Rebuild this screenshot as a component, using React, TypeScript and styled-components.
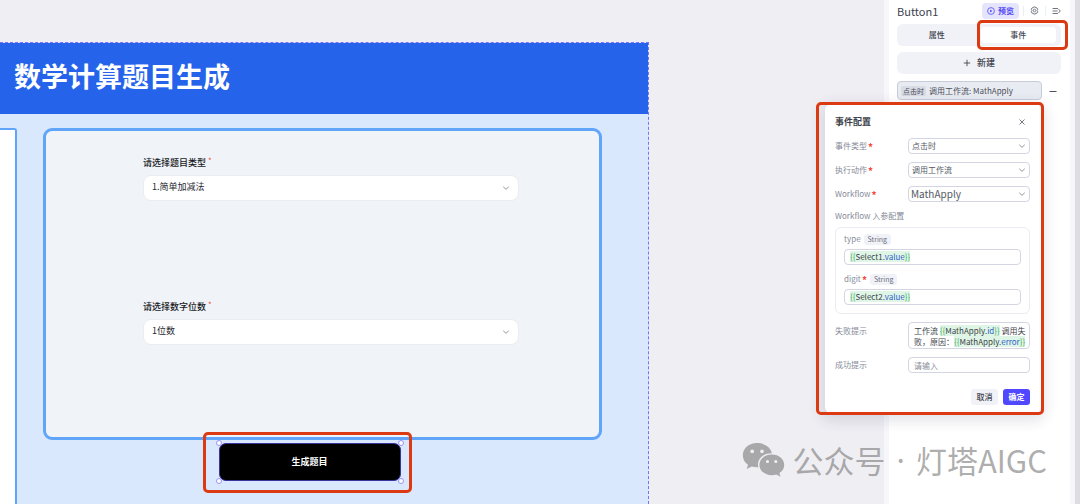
import React from "react";
import styled, { createGlobalStyle, css } from "styled-components";

const GlobalStyle = createGlobalStyle`
  *, *::before, *::after { box-sizing: border-box; }
  body {
    margin: 0;
    background: #efeef3;
    font-family: "Noto Sans CJK SC", "Noto Sans", sans-serif;
    font-size: 8px;
    line-height: 12px;
    color: #41464c;
  }
  button, input, select, textarea { font: inherit; color: inherit; margin: 0; }
  h1, h2 { margin: 0; }
`;

const red = "#dc3a12";

const Editor = styled.div`
  position: relative;
  display: flex;
  min-height: 100vh;
  overflow: hidden;
`;

const Stage = styled.main`
  flex: 1;
  display: flex;
  min-width: 0;
  padding: 42px 235px 0 0;
`;

const Artboard = styled.section`
  flex: 1;
  display: flex;
  flex-direction: column;
  min-width: 0;
  background: #dae8fe;
  border: 1px dashed #7a70fa;
  border-width: 1px 1px 0 0;
`;

const Banner = styled.header`
  height: 71px;
  display: flex;
  align-items: center;
  padding: 0 14px 5px;
  background: #2563eb;
`;

const BannerTitle = styled.h1`
  color: #fff;
  font-size: 27px;
  line-height: 40px;
  font-weight: 700;
`;

const Content = styled.div`
  flex: 1;
  display: flex;
  gap: 26px;
  padding: 14px 46px 0 0;
`;

const SideCard = styled.div`
  width: 17px;
  background: #fff;
  border: solid #60a5fa;
  border-width: 2px 2px 0 0;
  border-radius: 0 3px 0 0;
`;

const Column = styled.div`
  flex: 1;
  min-width: 0;
  display: flex;
  flex-direction: column;
  align-items: center;
  gap: 3px;
`;

const FormCard = styled.div`
  width: 100%;
  height: 312px;
  display: flex;
  flex-direction: column;
  gap: 100px;
  padding: 26px 80px 0 97px;
  background: #f0f3f8;
  border: 3px solid #60a5fa;
  border-radius: 9px;
`;

const Field = styled.div`
  display: flex;
  flex-direction: column;
  gap: 6px;
  font-size: 9px;
`;

const FieldLabel = styled.label`
  color: #17191d;
  font-weight: 500;
`;

const Required = styled.span<{ $raised?: boolean }>`
  margin-left: ${(p) => (p.$raised ? 2 : 1)}px;
  color: #f5483b;
  font-size: ${(p) => (p.$raised ? 8 : 10)}px;
  font-weight: ${(p) => (p.$raised ? 400 : 700)};
  line-height: 8px;
  vertical-align: ${(p) => (p.$raised ? "top" : "middle")};
`;

const SelectWrap = styled.div<{ $inset: number }>`
  display: grid;
  align-items: center;
  min-width: 0;

  > * { grid-area: 1 / 1; }
  > svg {
    justify-self: end;
    margin-right: ${(p) => p.$inset}px;
    pointer-events: none;
  }
`;

const BigSelect = styled.select`
  appearance: none;
  width: 100%;
  height: 26px;
  padding: 0 24px 2px 8px;
  border: 1px solid #e9ecf0;
  border-radius: 8px;
  background: #fff;
  color: #25282e;
`;

const Selection = styled.div`
  position: relative;
  width: 182px;
  height: 38px;
  margin-right: 26px;
`;

const GenerateButton = styled.button`
  width: 100%;
  height: 100%;
  border: 1px solid #3a34a0;
  border-radius: 7px;
  background: #000;
  color: #fff;
  font-size: 9px;
  font-weight: 700;
`;

const Handle = styled.i<{ $x: "left" | "right"; $y: "top" | "bottom" }>`
  position: absolute;
  ${(p) => p.$x}: -3px;
  ${(p) => p.$y}: -3px;
  width: 6px;
  height: 6px;
  border: 1px solid #9a92fb;
  border-radius: 50%;
  background: #fff;
`;

const Highlight = styled.div<{ $inset: string }>`
  position: absolute;
  inset: ${(p) => p.$inset};
  z-index: 1;
  border: 3px solid ${red};
  border-radius: 5px;
  pointer-events: none;
`;

const Panel = styled.aside`
  position: relative;
  width: 191px;
  display: flex;
  flex-direction: column;
  padding: 2px 9px 0 8px;
  background: #fff;
  border: solid #f6f6fb;
  border-width: 0 5px;
`;

const Gutter = styled.div`
  width: 5px;
  background: #dddde2;
`;

const PanelHead = styled.div`
  height: 17px;
  display: flex;
  align-items: center;
`;

const PanelTitle = styled.h2`
  flex: 1;
  font-size: 11px;
  line-height: 16px;
  font-weight: 400;
  color: #3d4250;
`;

const PreviewButton = styled.button`
  height: 16px;
  display: flex;
  align-items: center;
  gap: 3px;
  padding: 0 5px;
  border: 0;
  border-radius: 4px;
  background: #e4e4fd;
  color: #5349f5;
  font-weight: 700;
`;

const IconButton = styled.button<{ $divided?: boolean }>`
  width: 22px;
  height: 10px;
  display: flex;
  align-items: center;
  justify-content: center;
  padding: 0;
  border: 0;
  background: none;
  color: #4e525e;
  ${(p) => p.$divided && css`border-left: 1px solid #eceef2;`}
`;

const HeadTools = styled.div`
  display: flex;
  align-items: center;
  margin-right: -6px;

  > :first-child { margin-right: 4px; }
`;

const Tabs = styled.div`
  position: relative;
  display: flex;
  gap: 6px;
  height: 22px;
  margin-top: 5px;
  padding: 3px 5px 3px 2px;
  border-radius: 6px;
  background: #f1f2f7;
`;

const Tab = styled.button<{ $active?: boolean }>`
  flex: 1;
  padding: 0;
  border: 0;
  border-radius: 4px;
  background: ${(p) => (p.$active ? "#fff" : "none")};
  color: #41454f;
  font-weight: 500;
`;

const AddButton = styled.button`
  height: 22px;
  display: flex;
  align-items: center;
  justify-content: center;
  gap: 6px;
  margin-top: 6px;
  padding: 0;
  border: 0;
  border-radius: 6px;
  background: #f1f2f7;
  color: #41454f;
  font-size: 9px;
  font-weight: 500;
`;

const EventRow = styled.div`
  display: flex;
  align-items: center;
  margin: 7px -3px 0 0;
`;

const EventItem = styled.button`
  flex: 1;
  height: 19px;
  display: flex;
  align-items: center;
  gap: 3px;
  padding: 0 3px;
  border: 1px solid #c8cbdc;
  border-radius: 4px;
  background: #e9ebf2;
  color: #4a4f5a;
  white-space: nowrap;
`;

const Trigger = styled.span`
  padding: 0 2px;
  border-radius: 2px;
  background: #d9dbe5;
  font-size: 7px;
  line-height: 10px;
`;

const Popover = styled.form`
  position: absolute;
  top: 104px;
  right: 29px;
  width: 216px;
  z-index: 2;
  display: flex;
  flex-direction: column;
  gap: 8px;
  padding: 9px 11px 8px 10px;
  background: #fff;
  border-radius: 6px;
  box-shadow: 0 4px 14px 4px rgba(50, 50, 80, 0.13);
`;

const PopoverHead = styled.div`
  display: flex;
  align-items: center;
  justify-content: space-between;
  height: 17px;
  font-size: 9px;
  font-weight: 700;
  color: #3b3f49;
`;

const PopoverTitle = styled.h2`
  font-size: inherit;
  font-weight: inherit;
`;

const CloseButton = styled.button`
  width: 16px;
  height: 16px;
  display: grid;
  place-items: center;
  padding: 0;
  border: 0;
  background: none;
  color: #50545e;
`;

const Row = styled.div<{ $top?: boolean }>`
  display: grid;
  grid-template-columns: 73px 1fr;
  align-items: ${(p) => (p.$top ? "start" : "center")};
`;

const Caption = styled.label<{ $spaced?: boolean }>`
  color: #868b99;
  white-space: nowrap;
  ${(p) => p.$spaced && css`padding-top: 3px;`}
`;

const GroupCaption = styled.div`
  height: 13px;
  color: #868b99;
`;

const boxed = css`
  border: 1px solid #d3d5e2;
  border-radius: 4px;
  background: #fff;
`;

const SmallSelect = styled.select<{ $large?: boolean }>`
  ${boxed}
  appearance: none;
  width: 100%;
  height: 16px;
  padding: 0 14px 0 ${(p) => (p.$large ? 2 : 3)}px;
  font-size: ${(p) => (p.$large ? 10 : 8)}px;
  line-height: 14px;
  color: #555a65;
`;

const TextInput = styled.input`
  ${boxed}
  width: 100%;
  min-width: 0;
  height: 16px;
  padding: 0 5px;
  &::placeholder { color: #888c99; opacity: 1; }
`;

const Params = styled.div`
  display: flex;
  flex-direction: column;
  gap: 8px;
  margin-top: -4px;
  padding: 5px 8px 8px;
  border: 1px solid #ececf2;
  border-radius: 6px;
`;

const Param = styled.div`
  display: flex;
  flex-direction: column;
  gap: 4px;
`;

const ParamHead = styled.div`
  display: flex;
  align-items: center;
  gap: 3px;
  height: 12px;
`;

const TypeTag = styled.span`
  padding: 0 4px;
  border-radius: 3px;
  background: #f1f1f8;
  color: #6d717e;
  font-size: 7px;
  line-height: 11px;
`;

const CodeField = styled.div<{ $lines?: number }>`
  ${boxed}
  min-height: ${(p) => (p.$lines === 2 ? 27 : 16)}px;
  padding: ${(p) => (p.$lines === 2 ? "2px 0 0 5px" : "1px 5px")};
  line-height: ${(p) => (p.$lines === 2 ? 11 : 12)}px;
  white-space: nowrap;
  overflow: hidden;
  outline: 0;
`;

const Expr = styled.span`
  background: #dff6e7;
  color: #3fae5f;
`;
const Obj = styled.span`
  color: #3e4347;
`;
const Prop = styled.span`
  color: #2e62c9;
`;

const Actions = styled.div`
  display: flex;
  justify-content: flex-end;
  gap: 5px;
  margin-top: 8px;
`;

const ActionButton = styled.button<{ $primary?: boolean }>`
  width: 27px;
  height: 16px;
  padding: 0;
  border: 0;
  border-radius: 3px;
  font-weight: ${(p) => (p.$primary ? 700 : 500)};
  background: ${(p) => (p.$primary ? "#5147ff" : "#f1f2f7")};
  color: ${(p) => (p.$primary ? "#fff" : "#41454f")};
`;

const Watermark = styled.div`
  position: absolute;
  right: 33px;
  bottom: 21px;
  z-index: 3;
  display: flex;
  align-items: center;
  gap: 8px;
  color: rgba(120, 120, 120, 0.6);
  font-size: 31px;
  line-height: 46px;
  white-space: nowrap;
  pointer-events: none;
`;

const Dot = styled.span`
  margin: 0 3px;
  font-family: "Noto Sans", sans-serif;
`;

const Chevron = () => (
  <svg width="8" height="8" viewBox="0 0 8 8" fill="none" stroke="#888c96" strokeWidth="0.9" strokeLinecap="round" strokeLinejoin="round" aria-hidden="true">
    <path d="M1.5 3 4 5.300 6.500 3" />
  </svg>
);

const PlayIcon = () => (
  <svg width="8" height="8" viewBox="0 0 8 8" fill="none" stroke="currentColor" strokeWidth="0.8" aria-hidden="true">
    <circle cx="4" cy="4" r="3.4" />
    <path d="M3.2 2.6 5.4 4 3.2 5.4Z" fill="currentColor" stroke="none" />
  </svg>
);

const GearIcon = () => (
  <svg width="9" height="9" viewBox="0 0 9 9" fill="none" stroke="currentColor" strokeWidth="0.7" strokeLinejoin="round" aria-hidden="true">
    <path d="M3.7.9h1.600l.5 1 1.200-.1.8 1.400-.7 1.300.7 1.300L7 7.200l-1.200-.1-.5 1H3.700l-.5-1-1.200.1-.8-1.400.7-1.300-.7-1.300L2 1.800l1.200.1Z" />
    <circle cx="4.5" cy="4.5" r="1.3" />
  </svg>
);

const CollapseIcon = () => (
  <svg width="9" height="8" viewBox="0 0 9 8" fill="none" stroke="currentColor" strokeWidth="0.8" strokeLinecap="round" strokeLinejoin="round" aria-hidden="true">
    <path d="M1 1.5h4.6M1 4h4.2M1 6.5h4.6M6.6 2.2 8.3 4 6.6 5.8" />
  </svg>
);

const PlusIcon = () => (
  <svg width="8" height="8" viewBox="0 0 8 8" stroke="currentColor" strokeWidth="0.9" aria-hidden="true">
    <path d="M4 .8v6.4M.8 4h6.4" />
  </svg>
);

const MinusIcon = () => (
  <svg width="8" height="8" viewBox="0 0 8 8" stroke="currentColor" strokeWidth="1" aria-hidden="true">
    <path d="M.5 4.5h7" />
  </svg>
);

const CloseIcon = () => (
  <svg width="6" height="6" viewBox="0 0 6 6" stroke="currentColor" strokeWidth="0.8" strokeLinecap="round" aria-hidden="true">
    <path d="M.8.8l4.4 4.4M5.2.8.8 5.2" />
  </svg>
);

const ChatLogo = () => (
  <svg width="43" height="36" viewBox="0 0 43 36" fill="currentColor" aria-hidden="true">
    <path
      fillRule="evenodd"
      d="M15 1C7 1 .8 6.400.8 13.200c0 3.900 2 7.300 5.200 9.500L4.700 27l4.900-2.600c1.700.5 3.500.8 5.600.8h1.200c-.3-.9-.4-1.900-.4-2.800 0-6.300 6-11.200 13.300-11.200h.6C28.700 5.300 22.500 1 15 1ZM10.200 7.400a1.900 1.900 0 1 1 0 3.800 1.900 1.900 0 0 1 0-3.800ZM20 7.400a1.900 1.900 0 1 1 0 3.800 1.900 1.900 0 0 1 0-3.800Z"
    />
    <path
      fillRule="evenodd"
      d="M29.800 12.600c-7 0-12.400 4.600-12.400 10.300s5.400 10.300 12.400 10.300c1.600 0 3.100-.2 4.500-.7l4.200 2.300-1.100-3.700c2.900-1.900 4.800-4.900 4.800-8.200 0-5.700-5.400-10.300-12.400-10.300ZM25.500 17.900a1.600 1.600 0 1 1 0 3.200 1.600 1.600 0 0 1 0-3.200ZM33.800 17.900a1.600 1.600 0 1 1 0 3.200 1.600 1.600 0 0 1 0-3.200Z"
    />
  </svg>
);

const Expression = ({ object, prop }: { object: string; prop: string }) => (
  <Expr>
    {"{{"}
    <Obj>{object}.</Obj>
    <Prop>{prop}</Prop>
    {"}}"}
  </Expr>
);

function FormField({ id, label, value }: { id: string; label: string; value: string }) {
  return (
    <Field>
      <FieldLabel htmlFor={id}>
        {label}
        <Required $raised>*</Required>
      </FieldLabel>
      <SelectWrap $inset={9}>
        <BigSelect id={id}>
          <option>{value}</option>
        </BigSelect>
        <Chevron />
      </SelectWrap>
    </Field>
  );
}

function ConfigSelect({ id, label, value, large }: { id: string; label: string; value: string; large?: boolean }) {
  return (
    <Row>
      <Caption htmlFor={id}>
        {label}
        <Required>*</Required>
      </Caption>
      <SelectWrap $inset={4}>
        <SmallSelect id={id} $large={large}>
          <option>{value}</option>
        </SmallSelect>
        <Chevron />
      </SelectWrap>
    </Row>
  );
}

function ParamField({ name, required, object }: { name: string; required?: boolean; object: string }) {
  const id = `param-${name}`;
  return (
    <Param>
      <ParamHead>
        <Caption as="span" id={id}>
          {name}
          {required && <Required>*</Required>}
        </Caption>
        <TypeTag>String</TypeTag>
      </ParamHead>
      <CodeField role="textbox" contentEditable suppressContentEditableWarning aria-labelledby={id}>
        <Expression object={object} prop="value" />
      </CodeField>
    </Param>
  );
}

export default function App() {
  return (
    <Editor>
      <GlobalStyle />
      <Stage>
        <Artboard>
          <Banner>
            <BannerTitle>数学计算题目生成</BannerTitle>
          </Banner>
          <Content>
            <SideCard />
            <Column>
              <FormCard>
                <FormField id="question-type" label="请选择题目类型" value="1.简单加减法" />
                <FormField id="digit-count" label="请选择数字位数" value="1位数" />
              </FormCard>
              <Selection>
                <GenerateButton type="button">生成题目</GenerateButton>
                <Handle $x="left" $y="top" />
                <Handle $x="right" $y="top" />
                <Handle $x="left" $y="bottom" />
                <Handle $x="right" $y="bottom" />
                <Highlight $inset="-11px -11px -12px -16px" />
              </Selection>
            </Column>
          </Content>
        </Artboard>
      </Stage>

      <Panel>
        <PanelHead>
          <PanelTitle>Button1</PanelTitle>
          <HeadTools>
            <PreviewButton type="button">
              <PlayIcon />
              预览
            </PreviewButton>
            <IconButton type="button" $divided aria-label="设置">
              <GearIcon />
            </IconButton>
            <IconButton type="button" $divided aria-label="收起">
              <CollapseIcon />
            </IconButton>
          </HeadTools>
        </PanelHead>
        <Tabs role="tablist">
          <Tab type="button" role="tab" aria-selected="false">属性</Tab>
          <Tab type="button" role="tab" aria-selected="true" $active>事件</Tab>
          <Highlight $inset="-4px -7px -4px 80px" />
        </Tabs>
        <AddButton type="button">
          <PlusIcon />
          新建
        </AddButton>
        <EventRow>
          <EventItem type="button">
            <Trigger>点击时</Trigger>
            调用工作流: MathApply
          </EventItem>
          <IconButton type="button" aria-label="删除">
            <MinusIcon />
          </IconButton>
        </EventRow>

        <Popover>
          <PopoverHead>
            <PopoverTitle>事件配置</PopoverTitle>
            <CloseButton type="button" aria-label="关闭">
              <CloseIcon />
            </CloseButton>
          </PopoverHead>
          <ConfigSelect id="event-type" label="事件类型" value="点击时" />
          <ConfigSelect id="event-action" label="执行动作" value="调用工作流" />
          <ConfigSelect id="event-workflow" label="Workflow" value="MathApply" large />
          <GroupCaption>Workflow 入参配置</GroupCaption>
          <Params>
            <ParamField name="type" object="Select1" />
            <ParamField name="digit" required object="Select2" />
          </Params>
          <Row $top>
            <Caption as="span" id="fail-tip" $spaced>失败提示</Caption>
            <CodeField $lines={2} role="textbox" contentEditable suppressContentEditableWarning aria-labelledby="fail-tip">
              工作流 <Expression object="MathApply" prop="id" /> 调用失
              <br />
              败，原因：<Expression object="MathApply" prop="error" />
            </CodeField>
          </Row>
          <Row>
            <Caption htmlFor="success-tip">成功提示</Caption>
            <TextInput id="success-tip" placeholder="请输入" />
          </Row>
          <Actions>
            <ActionButton type="button">取消</ActionButton>
            <ActionButton type="submit" $primary>确定</ActionButton>
          </Actions>
          <Highlight $inset="-2px -3px -2px -9px" />
        </Popover>
      </Panel>
      <Gutter />

      <Watermark>
        <ChatLogo />
        <span>公众号</span>
        <Dot>·</Dot>
        <span>灯塔AIGC</span>
      </Watermark>
    </Editor>
  );
}
